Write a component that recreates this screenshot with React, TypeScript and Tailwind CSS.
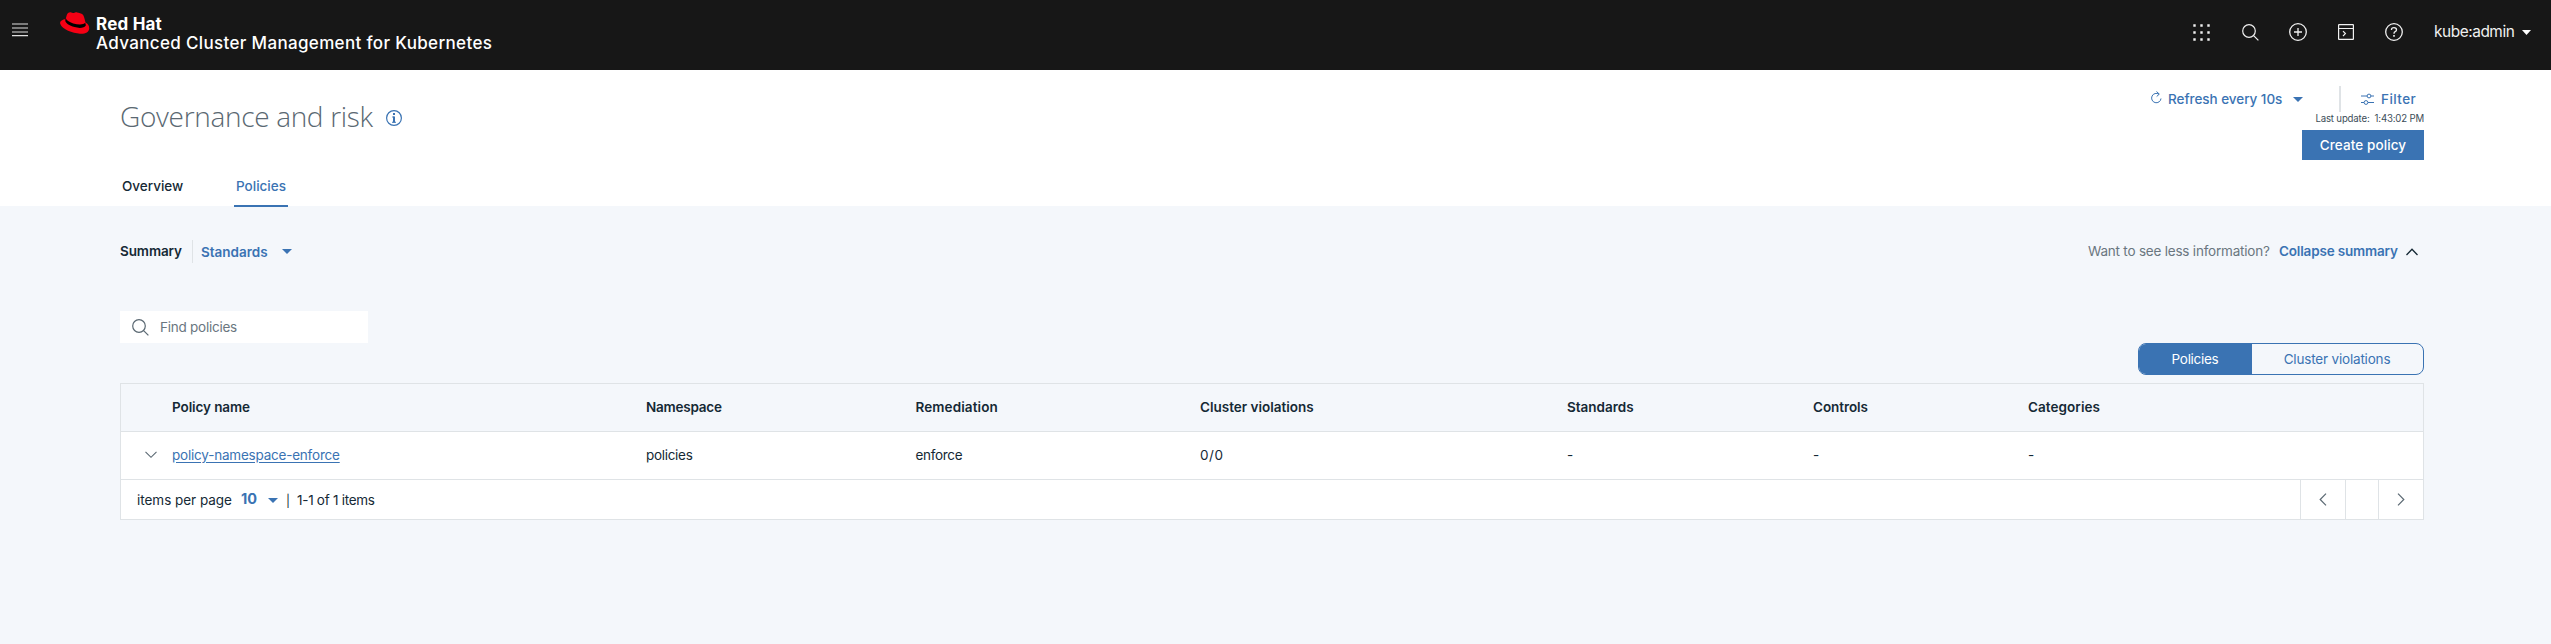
import type { ReactNode } from "react";

function Caret({ className = "" }: { className?: string }) {
  return (
    <svg className={`block shrink-0 ${className}`} width="10" height="5" viewBox="0 0 10 5" fill="currentColor">
      <path d="M0 0h10L5 5z" />
    </svg>
  );
}

function SearchIcon({ className = "" }: { className?: string }) {
  return (
    <svg className={`block shrink-0 ${className}`} width="17" height="17" viewBox="0 0 17 17" fill="none" stroke="currentColor" strokeWidth="1.2">
      <circle cx="7" cy="7" r="6.3" />
      <path d="M11.6 11.6l4.8 4.8" />
    </svg>
  );
}

function RedHatLogo() {
  return (
    <svg className="block shrink-0" width="30" height="23" viewBox="0 0 30 23">
      <path
        fill="#f50014"
        d="M6.8 2.9C7.2 1.4 8.6.3 10.2.2c1.5-.1 2.200.9 3.600.9 1.100 0 1.800-.9 3.200-.7 1.900.3 4.500.9 5.700 2 1.300 1.200 2 4.600 2.800 8.200 2.300 1.200 3.800 3.300 3.700 5.800-.2 3.900-3.900 5.600-9.200 5.300C12.500 21.300 2.200 17.500.3 12.100-.6 9.300 2.200 7.400 5.600 7.200z"
      />
      <path
        fill="#000"
        d="M5.900 6.300c.4 2 3.200 3.900 7.300 5.100 4.900 1.400 10.200 1.600 12-.6l.7 2.400c-1.300 2.900-6.600 3.300-11.400 1.900C9.300 13.700 5.200 11 5.300 8.600c0-.9.200-1.600.6-2.300z"
      />
    </svg>
  );
}

function Masthead() {
  return (
    <header className="flex h-[70px] bg-[#171717] text-white">
      <svg className="ml-3 mt-[23px] block shrink-0" width="16" height="14" viewBox="0 0 16 14" fill="#e0e0e0">
        <path d="M0 .4h16v1.200H0zM0 4.400h16v1.200H0zM0 8.400h16v1.200H0zM0 12h16v1.200H0z" />
      </svg>
      <div className="ml-8 mt-3 flex">
        <RedHatLogo />
        <div className="ml-1.5 mt-0.5 whitespace-nowrap text-[17px] leading-[20px]">
          <div className="font-bold tracking-[0.2px]">Red Hat</div>
          <div className="-mt-[1px] font-medium tracking-[0.34px]">Advanced Cluster Management for Kubernetes</div>
        </div>
      </div>
      <div className="ml-auto mr-[20px] mt-[22px] flex h-5 items-center text-[#f0f0f0]">
        <svg className="block" width="17" height="17" viewBox="0 0 17 17" fill="currentColor">
          <path d="M.300.300h2.400v2.400H.300zM7.300.300h2.400v2.400H7.300zM14.300.300h2.400v2.400h-2.400zM.300 7.300h2.400v2.400H.300zM7.300 7.300h2.400v2.400H7.300zM14.300 7.300h2.400v2.400h-2.400zM.300 14.300h2.400v2.400H.300zM7.300 14.300h2.400v2.400H7.300zM14.300 14.300h2.400v2.400h-2.400z" />
        </svg>
        <SearchIcon className="ml-8" />
        <svg className="ml-[30px] block" width="18" height="18" viewBox="0 0 18 18" fill="none" stroke="currentColor" strokeWidth="1.3">
          <circle cx="9" cy="9" r="8.3" />
          <path d="M9 5v8M5 9h8" />
        </svg>
        <svg className="ml-[31px] block" width="16" height="16" viewBox="0 0 16 16" fill="none" stroke="currentColor" strokeWidth="1.2">
          <rect x=".6" y=".6" width="14.8" height="14.8" rx=".5" />
          <path d="M.6 4.500h14.800M5 7.200l2.400 2.400L5 12" />
        </svg>
        <svg className="ml-[31px] block" width="18" height="18" viewBox="0 0 18 18" fill="none" stroke="currentColor" strokeWidth="1.3">
          <circle cx="9" cy="9" r="8.3" />
          <path d="M6.500 7V6.500Q6.500 4.600 9 4.600T11.500 6.800Q11.500 8 10.200 8.600T9 10.700" />
          <path d="M9 12v1.700" strokeWidth="1.6" />
        </svg>
        <span className="ml-[31px] w-[88px] whitespace-nowrap text-[15.4px] leading-5 tracking-[-0.44px]">kube:admin</span>
        <svg className="block text-white" width="9" height="5" viewBox="0 0 9 5" fill="currentColor">
          <path d="M0 0h9L4.500 5z" />
        </svg>
      </div>
    </header>
  );
}

function PageHeader() {
  return (
    <section className="flex h-[136px] justify-between bg-white pl-[120px] pr-[127px]">
      <div>
        <div className="mt-[26px] flex h-10 items-center">
          <h1 className="w-[266px] whitespace-nowrap font-['Open_Sans',sans-serif] text-[28px] font-light leading-10 tracking-[-0.32px] text-[#5a6872]">
            Governance and risk
          </h1>
          <svg className="mt-1 block" width="16" height="16" viewBox="0 0 16 16" fill="none" stroke="#3a73b3">
            <circle cx="8" cy="8" r="7.4" strokeWidth="1.2" />
            <path d="M6.200 7h2M6 12.300h4" strokeWidth="1.1" />
            <path d="M8 6.500v6" strokeWidth="2" />
            <path d="M8 3v2" strokeWidth="2" />
          </svg>
        </div>
        <nav className="mt-[33px] flex text-[13.5px] font-medium leading-[34px]">
          <div className="w-[114px] pl-0.5 text-[#152935]">Overview</div>
          <div className="h-[38px] w-[54px] whitespace-nowrap border-b-2 border-[#3a73b3] pl-0.5 text-[#3a73b3]">
            Policies
          </div>
        </nav>
      </div>
      <div className="flex flex-col items-end pt-4">
        <div className="flex h-[26px] items-center whitespace-nowrap text-[13.5px] font-medium text-[#3a73b3]">
          <svg className="-mt-1 block" width="11" height="13" viewBox="0 0 11 13" fill="none" stroke="currentColor">
            <path d="M8 3.200A4.700 4.700 0 1 0 10 7.500M5.500.500 8.300 3.100 5.700 5.500" />
          </svg>
          <span className="ml-1.5 w-[125px] tracking-[-0.04px]">Refresh every 10s</span>
          <Caret />
          <div className="ml-9 h-[26px] w-0.5 bg-[#dfe3e6]" />
          <svg className="ml-5 block" width="13" height="12" viewBox="0 0 13 12" fill="none" stroke="currentColor">
            <path d="M0 3h6M10 3h3M0 9.500h3M7 9.500h6" />
            <circle cx="8" cy="3" r="1.9" />
            <circle cx="5" cy="9.5" r="1.9" />
          </svg>
          <span className="ml-[7px] w-[43px] tracking-[0.45px]">Filter</span>
        </div>
        <div className="h-[18px] whitespace-pre text-[9.65px] leading-[14px] tracking-[-0.17px] text-[#3c4d58]">
          {"Last update:  1:43:02 PM"}
        </div>
        <button className="h-[30px] w-[122px] whitespace-nowrap bg-[#3a73b3] text-[13.5px] font-medium leading-[30px] tracking-[0.1px] text-white">
          Create policy
        </button>
      </div>
    </section>
  );
}

const COLUMNS = "grid grid-cols-[51px_474px_269.5px_284.5px_367px_246px_215px_1fr]";

function Cell({ children, className = "" }: { children?: ReactNode; className?: string }) {
  return <div className={`whitespace-nowrap ${className}`}>{children}</div>;
}

function PolicyTable() {
  return (
    <div className="mt-2 border border-[#dfe3e6] text-[13.5px] text-[#152935]">
      <div className={`${COLUMNS} h-[47px] font-semibold leading-[47px]`}>
        <Cell />
        <Cell className="tracking-[-0.1px]">Policy name</Cell>
        <Cell className="tracking-[-0.22px]">Namespace</Cell>
        <Cell className="tracking-[0.1px]">Remediation</Cell>
        <Cell>Cluster violations</Cell>
        <Cell>Standards</Cell>
        <Cell className="tracking-[-0.07px]">Controls</Cell>
        <Cell className="tracking-[0.06px]">Categories</Cell>
      </div>
      <div className={`${COLUMNS} h-12 border-t border-[#dfe3e6] bg-white leading-[47px]`}>
        <Cell>
          <svg className="ml-6 mt-[19px] block" width="12" height="8" viewBox="0 0 12 8" fill="none" stroke="#5a6872" strokeWidth="1.1">
            <path d="M.5.800 6 6.300 11.500.800" />
          </svg>
        </Cell>
        <Cell className="tracking-[-0.21px]">
          <a className="text-[#3a73b3] underline underline-offset-2">policy-namespace-enforce</a>
        </Cell>
        <Cell className="tracking-[-0.3px]">policies</Cell>
        <Cell className="tracking-[-0.33px]">enforce</Cell>
        <Cell className="tracking-[0.6px]">0/0</Cell>
        <Cell>-</Cell>
        <Cell>-</Cell>
        <Cell>-</Cell>
      </div>
      <div className="flex h-10 border-t border-[#dfe3e6] bg-white leading-[41px]">
        <span className="ml-4 w-[104px] whitespace-nowrap tracking-[-0.03px]">items per page</span>
        <span className="w-[27px] text-[14.5px] font-bold leading-[37px] text-[#3a73b3]">10</span>
        <Caret className="mt-[18px] text-[#3a73b3]" />
        <span className="ml-2 w-[11px] text-[12px]">|</span>
        <span className="whitespace-nowrap tracking-[-0.28px]">1-1 of 1 items</span>
        <div className="ml-auto flex text-[#5a6872]">
          <div className="flex w-[45px] items-center justify-center border-l border-[#dfe3e6]">
            <svg className="block" width="8" height="13" viewBox="0 0 8 13" fill="none" stroke="currentColor" strokeWidth="1.2">
              <path d="M7 .7 1.200 6.500 7 12.300" />
            </svg>
          </div>
          <div className="w-[33px] border-l border-[#dfe3e6]" />
          <div className="flex w-[45px] items-center justify-center border-l border-[#dfe3e6]">
            <svg className="block" width="8" height="13" viewBox="0 0 8 13" fill="none" stroke="currentColor" strokeWidth="1.2">
              <path d="M1 .7 6.800 6.500 1 12.300" />
            </svg>
          </div>
        </div>
      </div>
    </div>
  );
}

export default function App() {
  return (
    <div className="min-h-screen bg-[#f4f7fb] font-['Inter',sans-serif]">
      <Masthead />
      <PageHeader />
      <main className="pl-[120px] pr-[127px] pt-[34px]">
        <div className="flex h-[23px] items-center whitespace-nowrap text-[13.5px] font-semibold">
          <span className="w-[72px] tracking-[-0.1px] text-[#152935]">Summary</span>
          <div className="h-[23px] w-px bg-[#dfe3e6]" />
          <span className="ml-2 w-[81px] pt-px text-[#3a73b3]">Standards</span>
          <Caret className="-mt-px text-[#3a73b3]" />
          <div className="ml-auto flex items-center">
            <span className="w-[191px] font-normal tracking-[-0.21px] text-[#6a7680]">Want to see less information?</span>
            <span className="w-[127px] tracking-[-0.17px] text-[#3a73b3]">Collapse summary</span>
            <svg className="mr-1.5 block" width="12" height="8" viewBox="0 0 12 8" fill="none" stroke="#152935" strokeWidth="1.3">
              <path d="M.5 7 6 1.200 11.500 7" />
            </svg>
          </div>
        </div>
        <div className="mt-12 flex h-8 w-[248px] items-center bg-white pl-3 text-[#5a6872]">
          <SearchIcon />
          <span className="ml-[11px] text-[13.5px] leading-8 tracking-[-0.25px] text-[#6a7680]">Find policies</span>
        </div>
        <div className="ml-auto flex h-8 w-[286px] overflow-hidden rounded-lg border border-[#3a73b3] text-center text-[13.5px] leading-[30px]">
          <div className="w-[113px] bg-[#3a73b3] pr-px tracking-[-0.3px] text-white">Policies</div>
          <div className="flex-1 whitespace-nowrap pr-px tracking-[-0.18px] text-[#3a73b3]">Cluster violations</div>
        </div>
        <PolicyTable />
      </main>
    </div>
  );
}
